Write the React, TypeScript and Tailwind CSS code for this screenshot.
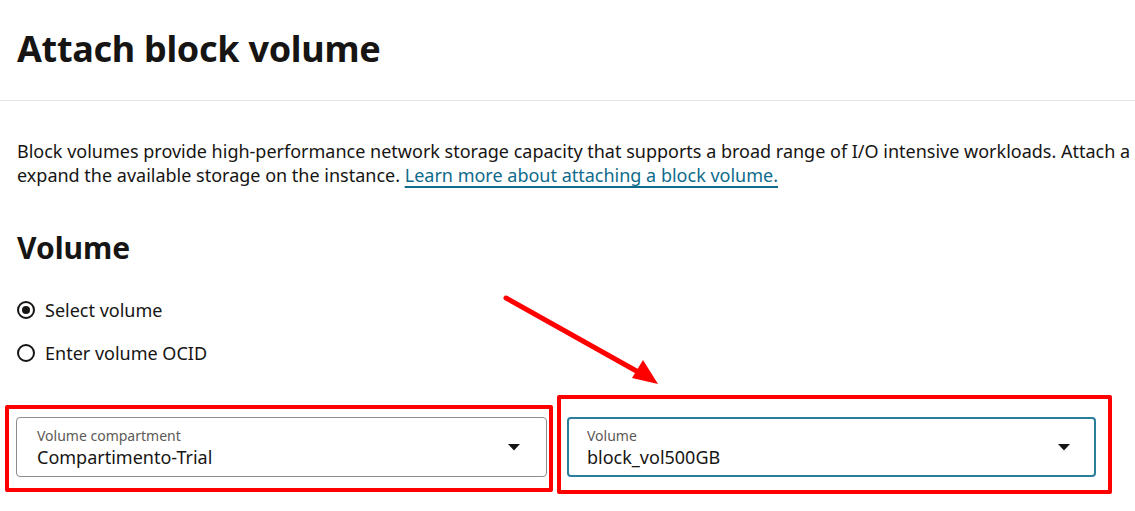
export default function App() {
  const font = { fontFamily: '"Noto Sans", "Open Sans", sans-serif' };
  return (
    <div className="relative w-[1135px] h-[511px] overflow-hidden bg-white text-[#161513]" style={font}>
      <div className="h-[101px] border-b border-[#e6e4e1] pl-[17px] pt-[24px]">
        <h1 className="text-[36px] font-bold leading-[50px] tracking-[-0.3px]">Attach block volume</h1>
      </div>
      <div className="pl-[17px] pt-[38px] text-[18px] leading-[24px] whitespace-nowrap">
        <div>Block volumes provide high-performance network storage capacity that supports a broad range of I/O intensive workloads. Attach a block volume to</div>
        <div>
          expand the available storage on the instance.{" "}
          <a className="text-[#0e6b8c] underline underline-offset-[4px] decoration-[1.5px]">Learn more about attaching a block volume.</a>
        </div>
      </div>
      <h2 className="pl-[17px] pt-[41px] text-[30px] font-bold leading-[40px]">Volume</h2>
      <div className="pl-[17px] pt-[30px] flex flex-col gap-[19px] text-[18px] leading-[24px]">
        <label className="flex items-center gap-[10px]">
          <span className="w-[18px] h-[18px] rounded-full border-[2px] border-[#161513] flex items-center justify-center">
            <span className="w-[8px] h-[8px] rounded-full bg-[#161513]" />
          </span>
          <span>Select volume</span>
        </label>
        <label className="flex items-center gap-[10px]">
          <span className="w-[18px] h-[18px] rounded-full border-[2px] border-[#161513]" />
          <span>Enter volume OCID</span>
        </label>
      </div>
      <div className="pl-[16px] pt-[52px] flex gap-[20px]">
        <div className="w-[531px] h-[60px] rounded-[4px] border border-[#8f8c89] flex items-center pl-[20px] pr-[26px]">
          <div className="flex-1 flex flex-col pt-[2px]">
            <span className="text-[14px] leading-[18px] text-[#5c5956]">Volume compartment</span>
            <span className="text-[18px] leading-[24px]">Compartimento-Trial</span>
          </div>
          <svg width="12" height="7" viewBox="0 0 12 7"><path d="M0 0h12L6 6.5z" fill="#161513" /></svg>
        </div>
        <div className="w-[529px] h-[60px] rounded-[4px] border-[2px] border-[#2a7e9c] flex items-center pl-[18px] pr-[24px]">
          <div className="flex-1 flex flex-col pt-[2px]">
            <span className="text-[14px] leading-[18px] text-[#5c5956]">Volume</span>
            <span className="text-[18px] leading-[24px]">block_vol500GB</span>
          </div>
          <svg width="12" height="7" viewBox="0 0 12 7"><path d="M0 0h12L6 6.5z" fill="#161513" /></svg>
        </div>
      </div>
      {/* annotations */}
      <div className="absolute left-[5px] top-[405px] w-[548px] h-[87px] border-[4px] border-[#ff0000] rounded-[2px]" />
      <div className="absolute left-[557px] top-[395px] w-[555px] h-[99px] border-[4px] border-[#ff0000] rounded-[2px]" />
      <svg className="absolute left-0 top-0" width="1135" height="511" viewBox="0 0 1135 511">
        <line x1="506" y1="298" x2="640" y2="373" stroke="#ff0000" strokeWidth="5" strokeLinecap="round" />
        <path d="M658 384 L632 378 L643 360 Z" fill="#ff0000" />
      </svg>
    </div>
  );
}
